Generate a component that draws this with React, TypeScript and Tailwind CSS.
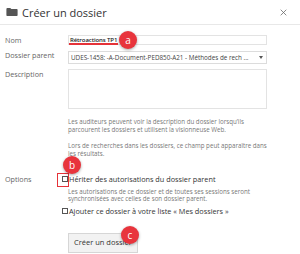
import React from "react";

function FolderIcon({ className }: { className?: string }) {
  return (
    <svg viewBox="0 0 14 10" className={className} fill="currentColor">
      <path d="M0 1.2C0 .5.5 0 1.2 0h3.6l1.4 1.4h6.6c.7 0 1.2.5 1.2 1.2v6.2c0 .7-.5 1.2-1.2 1.2H1.2C.5 10 0 9.5 0 8.8z" />
    </svg>
  );
}

function CloseIcon({ className }: { className?: string }) {
  return (
    <svg viewBox="0 0 10 10" className={className} fill="none" stroke="currentColor" strokeWidth="1.1">
      <path d="M1 1l8 8M9 1l-8 8" />
    </svg>
  );
}

function Badge({ letter, className }: { letter: string; className: string }) {
  return (
    <div
      className={`absolute grid h-[18px] w-[18px] place-items-center rounded-full bg-[#e8343c] text-[10px] leading-none text-white shadow-[0_1px_3px_rgba(0,0,0,0.35)] ${className}`}
    >
      {letter}
    </div>
  );
}

function Checkbox() {
  return <span className="inline-block h-[6px] w-[6px] shrink-0 border border-[#555] bg-white" />;
}

export default function App() {
  return (
    <div className="relative h-[254px] w-[300px] overflow-hidden bg-white font-['Open_Sans',sans-serif] text-[#333]">
      {/* Header */}
      <header className="flex h-[25px] items-center border-b border-[#e8e8e8] pl-[5px] pr-[13px]">
        <FolderIcon className="h-[8px] w-[14px] text-[#555]" />
        <h1 className="ml-[3px] text-[11px] leading-none text-[#333]">Créer un dossier</h1>
        <CloseIcon className="ml-auto h-[7px] w-[7px] text-[#666]" />
      </header>

      {/* Form */}
      <div className="grid grid-cols-[68px_199px] pt-[10px] text-[7.2px] leading-[10px]">
        <label className="pl-[5px] text-[#666]">Nom</label>
        <div className="flex h-[10px] items-center border border-[#e3e3e3] px-[1px]">
          <span className="relative text-[6px] font-semibold tracking-[-0.1px] text-[#222]">
            Rétroactions TP1
            <span className="absolute -left-[1px] -right-[1px] top-[8px] h-[1.5px] bg-[#e53238]" />
          </span>
        </div>

        <label className="mt-[4px] pl-[5px] leading-[13px] text-[#666]">Dossier parent</label>
        <div className="mt-[6px] flex h-[13px] items-center border border-[#dcdcdc] pl-[2px] pr-[3px] text-[6.3px] text-[#444]">
          <span className="truncate">UDES-1458: -A-Document-PED850-A21 - Méthodes de rech ...</span>
          <span className="ml-auto h-0 w-0 border-x-[2.5px] border-t-[3px] border-x-transparent border-t-[#555]" />
        </div>

        <label className="mt-[5px] pl-[5px] text-[#666]">Description</label>
        <div className="mt-[5px] h-[40px] border border-[#e3e3e3]" />

        <div />
        <div className="mt-[9px] text-[6.2px] leading-[8px] text-[#777]">
          <p>
            Les auditeurs peuvent voir la description du dossier lorsqu’ils parcourent les
            dossiers et utilisent la visionneuse Web.
          </p>
          <p className="mt-[8px]">
            Lors de recherches dans les dossiers, ce champ peut apparaître dans les
            résultats.
          </p>
        </div>

        <label className="mt-[16px] pl-[5px] text-[#666]">Options</label>
        <div className="mt-[16px]">
          <div className="-ml-[6px] flex items-center gap-[1px] text-[7.3px] text-[#333]">
            <Checkbox />
            <span>Hériter des autorisations du dossier parent</span>
          </div>
          <p className="mt-[4px] text-[6.2px] leading-[7px] text-[#777]">
            Les autorisations de ce dossier et de toutes ses sessions seront synchronisées
            avec celles de son dossier parent.
          </p>
          <div className="-ml-[6px] mt-[4px] flex items-center gap-[1px] text-[7.3px] text-[#333]">
            <Checkbox />
            <span>Ajouter ce dossier à votre liste « Mes dossiers »</span>
          </div>
          <button className="mt-[17px] h-[20px] border border-[#d6d6d6] bg-[#f2f2f2] px-[5px] text-[7.5px] leading-none text-[#333]">
            Créer un dossier
          </button>
        </div>
      </div>

      {/* Annotations */}
      <div className="absolute left-[57px] top-[173px] h-[14px] w-[12px] border-[1.5px] border-[#e53238]" />
      <Badge letter="a" className="left-[119px] top-[31px]" />
      <Badge letter="b" className="left-[63px] top-[156px]" />
      <Badge letter="c" className="left-[121px] top-[226px]" />
    </div>
  );
}
